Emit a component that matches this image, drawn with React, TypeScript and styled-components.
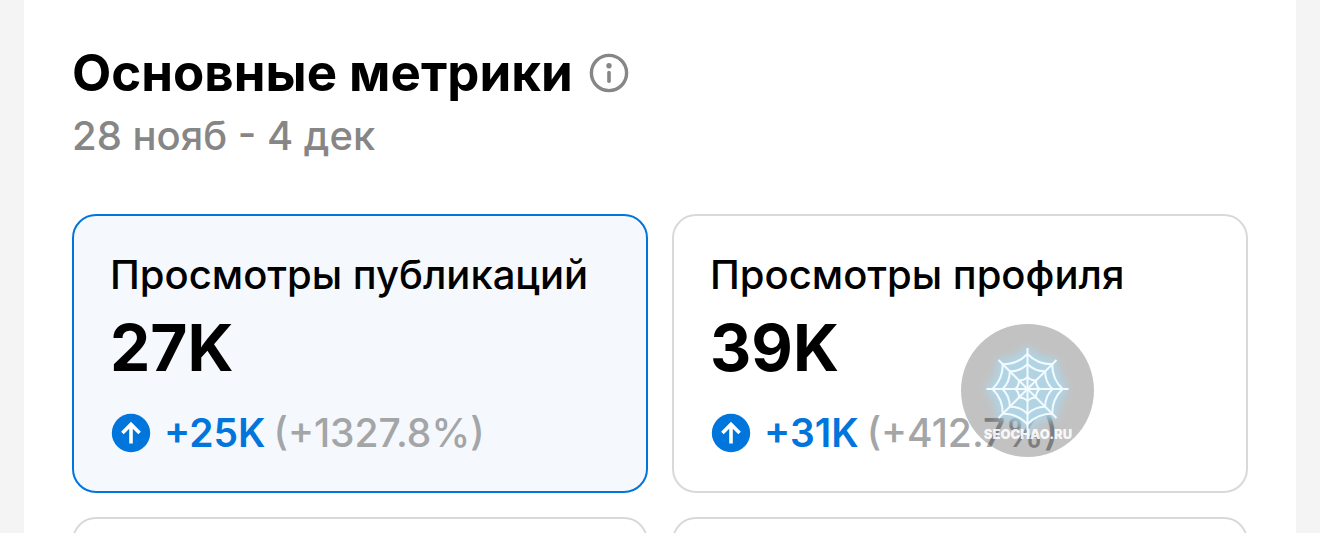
import React, { useState } from "react";
import styled, { createGlobalStyle } from "styled-components";

const GlobalStyle = createGlobalStyle`
  *, *::before, *::after { box-sizing: border-box; }
  body {
    margin: 0;
    background: #f4f4f4;
    color: #000;
    font-family: Inter, "Liberation Sans", sans-serif;
  }
`;

const Page = styled.main`
  height: 100vh;
  padding: 0 24px;
  overflow: hidden;
`;

const Panel = styled.section`
  min-height: 100%;
  padding: 40px 48px;
  background: #fff;
`;

const Heading = styled.header`
  display: flex;
  flex-direction: column;
  margin-bottom: 48px;
`;

const TitleRow = styled.div`
  display: flex;
  align-items: center;
  gap: 16px;
`;

const Title = styled.h1`
  margin: 0;
  font-size: 51px;
  line-height: 66px;
  font-weight: 700;
`;

const InfoButton = styled.button`
  display: flex;
  padding: 0;
  border: 0;
  background: none;
  color: #868686;
  cursor: pointer;
`;

const Period = styled.p`
  margin: 0;
  color: #868686;
  font-size: 40px;
  line-height: 60px;
  font-weight: 500;
`;

const MetricGrid = styled.div`
  display: grid;
  grid-template-columns: repeat(2, minmax(0, 1fr));
  gap: 24px;
`;

const MetricSlot = styled.div`
  position: relative;
  display: grid;
`;

const MetricCard = styled.button<{ $selected: boolean }>`
  display: flex;
  flex-direction: column;
  align-items: flex-start;
  min-height: 279px;
  padding: 36px;
  border: 2px solid ${(p) => (p.$selected ? "#0075dc" : "#d9d9d9")};
  border-radius: 24px;
  background: ${(p) => (p.$selected ? "#f5f8fd" : "#fff")};
  color: inherit;
  font-family: inherit;
  text-align: left;
  white-space: nowrap;
  cursor: pointer;
`;

const MetricName = styled.span`
  font-size: 40px;
  line-height: 46px;
  font-weight: 500;
`;

const MetricValue = styled.span`
  margin-bottom: 14px;
  font-size: 64px;
  line-height: 100px;
  font-weight: 700;
`;

const Change = styled.span`
  display: flex;
  align-items: center;
  font-size: 39px;
  line-height: 42px;
  font-weight: 500;
`;

const ChangeAmount = styled.span`
  margin: 0 8px 0 12px;
  color: #0075dc;
  font-weight: 600;
`;

const ChangePercent = styled.span`
  color: #a3a5a7;
`;

const Stamp = styled.div`
  position: absolute;
  top: 110px;
  right: 154px;
  display: flex;
  pointer-events: none;
`;

const InfoIcon = () => (
  <svg width="40" height="40" viewBox="0 0 40 40" fill="none" aria-hidden="true">
    <circle cx="20" cy="20" r="17.6" stroke="currentColor" strokeWidth="3.4" />
    <circle cx="20" cy="12.8" r="2.7" fill="currentColor" />
    <path d="M20 19.6v8.6" stroke="currentColor" strokeWidth="3.6" strokeLinecap="round" />
  </svg>
);

const UpIcon = () => (
  <svg width="42" height="40" viewBox="0 0 42 40" fill="none" aria-hidden="true">
    <circle cx="21" cy="20" r="19.2" fill="#0075dc" />
    <path d="M21 30.4V11.4M12.4 20L21 11.4l8.6 8.6" stroke="#fff" strokeWidth="3.6" />
  </svg>
);

const spokes = [0, 45, 90, 135, 180, 225, 270, 315];

// One ring of threads sagging inward between neighbouring spokes.
const ring = (radius: number) =>
  spokes
    .map((angle, i) => {
      const at = (deg: number, r: number) => {
        const rad = (deg * Math.PI) / 180;
        return `${(66.5 + r * Math.cos(rad)).toFixed(2)} ${(65 + r * Math.sin(rad)).toFixed(2)}`;
      };
      return `${i === 0 ? `M${at(angle, radius)}` : ""}Q${at(angle + 22.5, radius * 0.76)} ${at(angle + 45, radius)}`;
    })
    .join("");

const WebStamp = () => (
  <svg width="133" height="133" viewBox="0 0 133 133" role="img" aria-label="SEOCHAO.RU">
    <defs>
      <filter id="glow" x="-30%" y="-30%" width="160%" height="160%">
        <feGaussianBlur stdDeviation="4" />
      </filter>
    </defs>
    <circle cx="66.5" cy="66.5" r="66.5" fill="#000" fillOpacity="0.24" />
    <path d={ring(37)} fill="#acd8ec" fillOpacity="0.75" stroke="#acd8ec" strokeOpacity="0.75" strokeWidth="9" filter="url(#glow)" />
    <g fill="none" stroke="#f2fbff" strokeWidth="2">
      {spokes.map((angle) => (
        <path key={angle} d="M66.5 65h41" transform={`rotate(${angle} 66.5 65)`} />
      ))}
      <path d={ring(35)} />
      <path d={ring(25)} />
      <path d={ring(12)} />
    </g>
    <text
      x="67"
      y="114.5"
      fill="#fff"
      fillOpacity="0.9"
      fontFamily="Inter, sans-serif"
      fontSize="13"
      fontWeight="900"
      textAnchor="middle"
    >
      SEOCHAO.RU
    </text>
  </svg>
);

type Metric = { id: string; name?: string; value?: string; amount?: string; percent?: string; stamped?: boolean };

const metrics: Metric[] = [
  { id: "posts", name: "Просмотры публикаций", value: "27K", amount: "+25K", percent: "(+1327.8%)" },
  { id: "profile", name: "Просмотры профиля", value: "39K", amount: "+31K", percent: "(+412.7%)", stamped: true },
  { id: "third" },
  { id: "fourth" },
];

export default function App() {
  const [selected, setSelected] = useState("posts");

  return (
    <>
      <GlobalStyle />
      <Page>
        <Panel>
          <Heading>
            <TitleRow>
              <Title>Основные метрики</Title>
              <InfoButton type="button" aria-label="Основные метрики">
                <InfoIcon />
              </InfoButton>
            </TitleRow>
            <Period>28 нояб - 4 дек</Period>
          </Heading>
          <MetricGrid>
            {metrics.map((m) => (
              <MetricSlot key={m.id}>
                <MetricCard
                  type="button"
                  $selected={selected === m.id}
                  aria-pressed={selected === m.id}
                  onClick={() => setSelected(m.id)}
                >
                  {m.name && (
                    <>
                      <MetricName>{m.name}</MetricName>
                      <MetricValue>{m.value}</MetricValue>
                      <Change>
                        <UpIcon />
                        <ChangeAmount>{m.amount}</ChangeAmount>
                        <ChangePercent>{m.percent}</ChangePercent>
                      </Change>
                    </>
                  )}
                </MetricCard>
                {m.stamped && (
                  <Stamp>
                    <WebStamp />
                  </Stamp>
                )}
              </MetricSlot>
            ))}
          </MetricGrid>
        </Panel>
      </Page>
    </>
  );
}
